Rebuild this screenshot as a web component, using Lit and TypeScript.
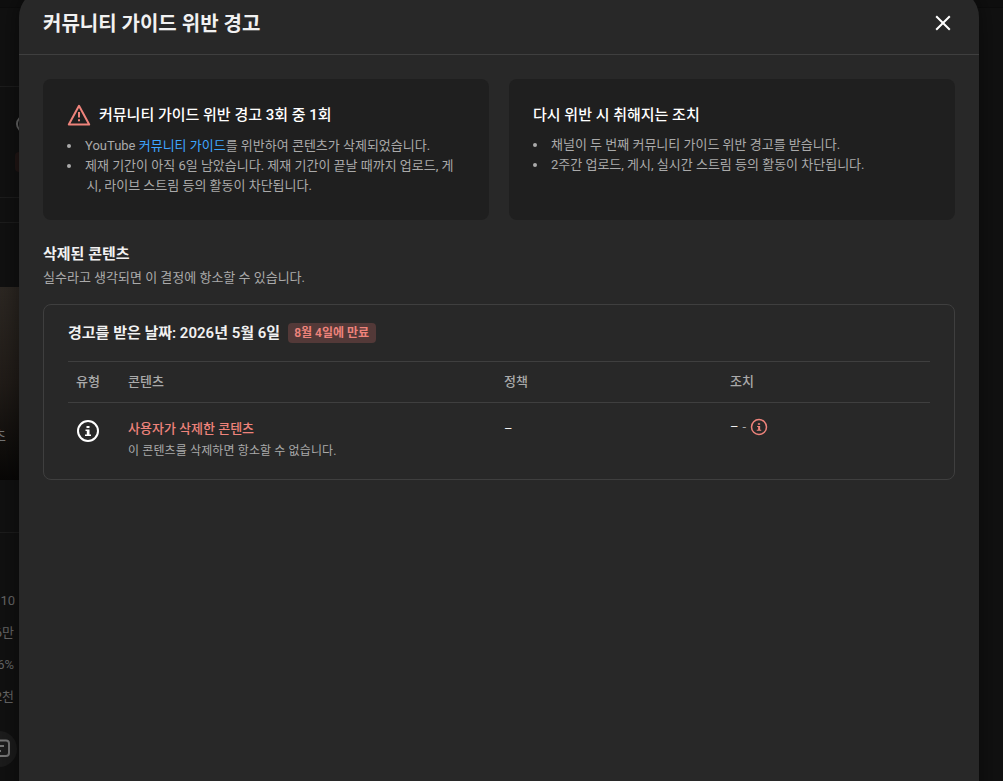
import { css, html, LitElement, svg } from "lit";
import { customElement, property, state } from "lit/decorators.js";

const infoShape = svg`
  <circle cx="12" cy="12" r="10" fill="none" stroke="currentColor" stroke-width="2" />
  <path
    fill="currentColor"
    d="M10.5 7h3v2h-3zM9.5 10.5h4V15.5H15V17H9v-1.5h1.8V12H9.5z"
  />
`;

@customElement("warning-card")
export class WarningCard extends LitElement {
  @property() heading = "";
  @property({ type: Boolean }) alert = false;

  static styles = css`
    :host {
      display: block;
      box-sizing: border-box;
      height: 141px;
      padding: 26px 24px 0;
      border-radius: 8px;
      background: #1f1f1f;
    }
    .head {
      display: flex;
      align-items: center;
      gap: 8px;
      height: 20px;
      color: #fff;
      font-size: 15px;
      font-weight: 500;
      line-height: 20px;
    }
    .head svg {
      width: 24px;
      height: 24px;
      color: #ee837b;
      flex: none;
    }
    .items {
      padding-top: 10px;
    }
    :host([alert]) .items {
      padding-top: 11px;
    }
  `;

  render() {
    return html`
      <div class="head">
        ${this.alert
          ? html`<svg viewBox="0 0 24 24">
              <path
                d="M12 2.8 22.2 21.5H1.8Z"
                fill="none"
                stroke="currentColor"
                stroke-width="2"
                stroke-linejoin="round"
              />
              <path fill="currentColor" d="M11 9h2v5.5h-2zM11 16.2h2V18.2h-2z" />
            </svg>`
          : ""}
        <span>${this.heading}</span>
      </div>
      <div class="items"><slot></slot></div>
    `;
  }
}

@customElement("app-root")
export class AppRoot extends LitElement {
  @state()
  private rows = [
    {
      title: "사용자가 삭제한 콘텐츠",
      note: "이 콘텐츠를 삭제하면 항소할 수 없습니다.",
      policy: "–",
      action: "–",
    },
  ];

  static styles = css`
    :host {
      display: block;
      position: relative;
      height: 781px;
      overflow: hidden;
      background: #111;
      color: #f1f1f1;
      font-family: Roboto, "Noto Sans CJK KR", sans-serif;
      font-size: 13px;
      line-height: 20px;
    }

    /* studio page behind the dialog */
    .page {
      display: flex;
      flex-direction: column;
      height: 781px;
      color: #686868;
    }
    .topbar {
      height: 7px;
      background: #0f0f0f;
      border-bottom: 1px solid #0c0c0c;
    }
    .rail {
      display: flex;
      flex-direction: column;
      width: 19px;
      overflow: hidden;
    }
    .line {
      height: 1px;
      background: #1d1d1d;
      flex: none;
    }
    .gap-a {
      height: 78px;
    }
    .avatar {
      box-sizing: border-box;
      width: 18px;
      height: 18px;
      margin: 28px 0 0 16px;
      border: 2px solid #686868;
      border-radius: 50%;
      flex: none;
    }
    .chip {
      width: 20px;
      height: 20px;
      margin: 19px 0 25px 15px;
      border-radius: 4px;
      background: #211615;
      flex: none;
    }
    .gap-b {
      height: 24px;
    }
    .thumb {
      display: flex;
      flex-direction: column;
      justify-content: flex-end;
      align-items: flex-end;
      box-sizing: border-box;
      height: 193px;
      margin-top: 64px;
      padding: 0 13px 34px 0;
      background: linear-gradient(#2d2823, #211c18 50%, #080706);
      white-space: nowrap;
      flex: none;
    }
    .thumb span {
      color: #777;
      font-size: 15px;
    }
    .gap-c {
      height: 52px;
    }
    .stats {
      display: flex;
      flex-direction: column;
      align-items: flex-end;
      gap: 12px;
      padding: 58px 4px 0 0;
      white-space: nowrap;
    }
    .stats span + span {
      margin-right: 1px;
    }
    .comment {
      display: flex;
      align-items: center;
      justify-content: center;
      width: 36px;
      height: 36px;
      margin: 24px 0 0 -19px;
      border-radius: 50%;
      background: #1c1c1c;
      flex: none;
    }
    .comment svg {
      width: 24px;
      height: 24px;
      color: #777;
    }

    .dialog {
      position: absolute;
      top: -11px;
      left: 19px;
      width: 960px;
      height: 840px;
      border-radius: 28px;
      background: #282828;
      box-shadow: 0 0 24px rgba(0, 0, 0, 0.5);
    }
    header {
      display: flex;
      align-items: center;
      justify-content: space-between;
      box-sizing: border-box;
      height: 66px;
      padding: 2px 24px 0;
      border-bottom: 1px solid #3f3f3f;
    }
    h1 {
      margin: 2px 0 0;
      font-size: 20px;
      font-weight: 600;
      line-height: 28px;
    }
    .close {
      display: flex;
      padding: 0;
      border: none;
      background: none;
      color: #fff;
    }
    .close svg {
      width: 24px;
      height: 24px;
    }
    .body {
      padding: 24px;
    }
    .cards {
      display: grid;
      grid-template-columns: 1fr 1fr;
      gap: 20px;
    }
    ul {
      margin: 0;
      padding: 0;
      list-style: none;
      color: #aaa;
    }
    li {
      display: flex;
    }
    li::before {
      content: "";
      width: 4px;
      height: 4px;
      margin: 8px 14px 0 0;
      border-radius: 50%;
      background: #aaa;
      flex: none;
    }
    .hang {
      padding-left: 1.5px;
      text-indent: -1.5px;
    }
    a {
      color: #3ea6ff;
      text-decoration: none;
    }
    h2 {
      margin: 24px 0 0;
      font-size: 15px;
      font-weight: 600;
      line-height: 20px;
    }
    .lead {
      margin: 4px 0 16px;
      color: #aaa;
    }
    .panel {
      box-sizing: border-box;
      height: 176px;
      padding: 18px 24px 0;
      border: 1px solid #3f3f3f;
      border-radius: 8px;
    }
    .date {
      display: flex;
      align-items: center;
      gap: 8px;
      height: 20px;
      padding-bottom: 18px;
      font-size: 15px;
      font-weight: 600;
    }
    .badge {
      padding: 0 6.5px 0 6px;
      border-radius: 4px;
      background: #533938;
      color: #ee837b;
      font-size: 12px;
    }
    .row {
      display: grid;
      grid-template-columns: 52px 376px 226px 1fr;
      padding-left: 8px;
      border-top: 1px solid #3f3f3f;
    }
    .labels {
      box-sizing: border-box;
      height: 41px;
      padding-bottom: 1px;
      align-items: center;
      color: #aaa;
      font-weight: 500;
    }
    .entry {
      padding-top: 16px;
    }
    .type {
      width: 24px;
      height: 24px;
      color: #fff;
    }
    .name {
      color: #ee837b;
      font-weight: 500;
    }
    .note {
      margin-top: 2px;
      color: #aaa;
      font-size: 12px;
      letter-spacing: 0.12px;
    }
    .action {
      display: flex;
      align-items: center;
      gap: 4px;
      height: 16px;
    }
    .muted {
      color: #aaa;
    }
    .action svg {
      width: 18px;
      height: 18px;
      color: #ee837b;
    }
  `;

  private renderPage() {
    return html`
      <div class="page">
        <div class="topbar"></div>
        <div class="rail">
          <div class="gap-a"></div>
          <div class="line"></div>
          <div class="avatar"></div>
          <div class="chip"></div>
          <div class="line"></div>
          <div class="gap-b"></div>
          <div class="line"></div>
          <div class="thumb"><span>초</span></div>
          <div class="gap-c"></div>
          <div class="line"></div>
          <div class="stats">
            <span>10</span>
            <span>6만</span>
            <span>6%</span>
            <span>2천</span>
          </div>
          <div class="comment">
            <svg viewBox="0 0 24 24" fill="none" stroke="currentColor" stroke-width="2">
              <path d="M4 3.5H19a3 3 0 0 1 3 3V16a3 3 0 0 1-3 3H13L8 22V19H4M8 9h9M8 14h6" />
            </svg>
          </div>
        </div>
      </div>
    `;
  }

  render() {
    return html`
      ${this.renderPage()}
      <div class="dialog">
        <header>
          <h1>커뮤니티 가이드 위반 경고</h1>
          <button class="close" aria-label="닫기">
            <svg viewBox="0 0 24 24" fill="none" stroke="currentColor" stroke-width="2">
              <path d="M5.2 5.2 18.8 18.8M18.8 5.2 5.2 18.8" />
            </svg>
          </button>
        </header>
        <div class="body">
          <div class="cards">
            <warning-card alert heading="커뮤니티 가이드 위반 경고 3회 중 1회">
              <ul>
                <li>
                  <span>YouTube <a>커뮤니티 가이드</a>를 위반하여 콘텐츠가 삭제되었습니다.</span>
                </li>
                <li>
                  <div class="hang">
                    제재 기간이 아직 6일 남았습니다. 제재 기간이 끝날 때까지 업로드, 게<br />시,
                    라이브 스트림 등의 활동이 차단됩니다.
                  </div>
                </li>
              </ul>
            </warning-card>
            <warning-card heading="다시 위반 시 취해지는 조치">
              <ul>
                <li><span>채널이 두 번째 커뮤니티 가이드 위반 경고를 받습니다.</span></li>
                <li><span>2주간 업로드, 게시, 실시간 스트림 등의 활동이 차단됩니다.</span></li>
              </ul>
            </warning-card>
          </div>
          <h2>삭제된 콘텐츠</h2>
          <div class="lead">실수라고 생각되면 이 결정에 항소할 수 있습니다.</div>
          <div class="panel">
            <div class="date">
              <span>경고를 받은 날짜: 2026년 5월 6일</span>
              <span class="badge">8월 4일에 만료</span>
            </div>
            <div class="row labels">
              <span>유형</span>
              <span>콘텐츠</span>
              <span>정책</span>
              <span>조치</span>
            </div>
            ${this.rows.map(
              (row) => html`
                <div class="row entry">
                  <svg class="type" viewBox="0 0 24 24">${infoShape}</svg>
                  <div>
                    <div class="name">${row.title}</div>
                    <div class="note">${row.note}</div>
                  </div>
                  <span>${row.policy}</span>
                  <div class="action">
                    <span>${row.action}</span>
                    <span class="muted">-</span>
                    <svg viewBox="0 0 24 24">${infoShape}</svg>
                  </div>
                </div>
              `
            )}
          </div>
        </div>
      </div>
    `;
  }
}
